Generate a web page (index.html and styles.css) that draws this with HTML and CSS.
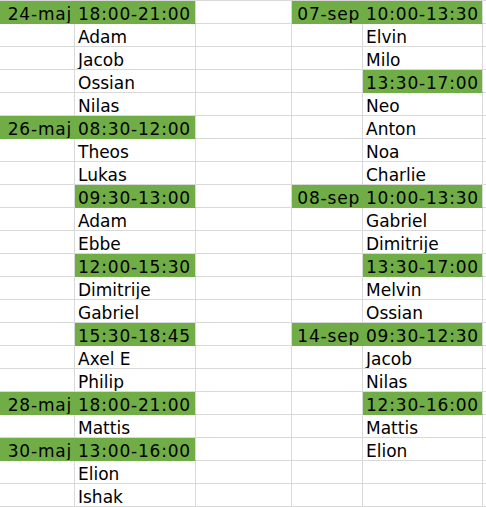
FILE: index.html
```html
<!DOCTYPE html>
<html lang="sv">
<head>
<meta charset="utf-8">
<title>Schema</title>
<link rel="stylesheet" href="styles.css">
</head>
<body>
<div class="sheet">
  <div class="c a g">24-maj</div><div class="c b g">18:00-21:00</div><div class="c x"></div><div class="c d g">07-sep</div><div class="c e g">10:00-13:30</div><div class="c f"></div>
  <div class="c a"></div><div class="c b">Adam</div><div class="c x"></div><div class="c d"></div><div class="c e">Elvin</div><div class="c f"></div>
  <div class="c a"></div><div class="c b">Jacob</div><div class="c x"></div><div class="c d"></div><div class="c e">Milo</div><div class="c f"></div>
  <div class="c a"></div><div class="c b">Ossian</div><div class="c x"></div><div class="c d"></div><div class="c e g">13:30-17:00</div><div class="c f"></div>
  <div class="c a"></div><div class="c b">Nilas</div><div class="c x"></div><div class="c d"></div><div class="c e">Neo</div><div class="c f"></div>
  <div class="c a g">26-maj</div><div class="c b g">08:30-12:00</div><div class="c x"></div><div class="c d"></div><div class="c e">Anton</div><div class="c f"></div>
  <div class="c a"></div><div class="c b">Theos</div><div class="c x"></div><div class="c d"></div><div class="c e">Noa</div><div class="c f"></div>
  <div class="c a"></div><div class="c b">Lukas</div><div class="c x"></div><div class="c d"></div><div class="c e">Charlie</div><div class="c f"></div>
  <div class="c a"></div><div class="c b g">09:30-13:00</div><div class="c x"></div><div class="c d g">08-sep</div><div class="c e g">10:00-13:30</div><div class="c f"></div>
  <div class="c a"></div><div class="c b">Adam</div><div class="c x"></div><div class="c d"></div><div class="c e">Gabriel</div><div class="c f"></div>
  <div class="c a"></div><div class="c b">Ebbe</div><div class="c x"></div><div class="c d"></div><div class="c e">Dimitrije</div><div class="c f"></div>
  <div class="c a"></div><div class="c b g">12:00-15:30</div><div class="c x"></div><div class="c d"></div><div class="c e g">13:30-17:00</div><div class="c f"></div>
  <div class="c a"></div><div class="c b">Dimitrije</div><div class="c x"></div><div class="c d"></div><div class="c e">Melvin</div><div class="c f"></div>
  <div class="c a"></div><div class="c b">Gabriel</div><div class="c x"></div><div class="c d"></div><div class="c e">Ossian</div><div class="c f"></div>
  <div class="c a"></div><div class="c b g">15:30-18:45</div><div class="c x"></div><div class="c d g">14-sep</div><div class="c e g">09:30-12:30</div><div class="c f"></div>
  <div class="c a"></div><div class="c b">Axel E</div><div class="c x"></div><div class="c d"></div><div class="c e">Jacob</div><div class="c f"></div>
  <div class="c a"></div><div class="c b">Philip</div><div class="c x"></div><div class="c d"></div><div class="c e">Nilas</div><div class="c f"></div>
  <div class="c a g">28-maj</div><div class="c b g">18:00-21:00</div><div class="c x"></div><div class="c d"></div><div class="c e g">12:30-16:00</div><div class="c f"></div>
  <div class="c a"></div><div class="c b">Mattis</div><div class="c x"></div><div class="c d"></div><div class="c e">Mattis</div><div class="c f"></div>
  <div class="c a g">30-maj</div><div class="c b g">13:00-16:00</div><div class="c x"></div><div class="c d"></div><div class="c e">Elion</div><div class="c f"></div>
  <div class="c a"></div><div class="c b">Elion</div><div class="c x"></div><div class="c d"></div><div class="c e"></div><div class="c f"></div>
  <div class="c a"></div><div class="c b">Ishak</div><div class="c x"></div><div class="c d"></div><div class="c e"></div><div class="c f"></div>
</div>
</body>
</html>
```
FILE: styles.css
```css
html, body {
  margin: 0;
  padding: 0;
  background: #ffffff;
}

.sheet {
  display: grid;
  grid-template-columns: 75px 121px 96px 71px 120px 3px;
  grid-auto-rows: 23px;
  border-top: 1px solid #d9d9d9;
  font-family: "DejaVu Sans", Verdana, sans-serif;
  font-size: 17px;
  color: #000000;
  overflow: hidden;
}

.c {
  box-sizing: border-box;
  border-right: 1px solid #d9d9d9;
  border-bottom: 1px solid #d9d9d9;
  line-height: 19px;
  padding-top: 4px;
  white-space: nowrap;
  overflow: hidden;
}

.a, .d {
  text-align: right;
  padding-right: 2px;
}

.b, .e {
  padding-left: 3px;
}

.f {
  border-right: none;
}

.g {
  background: #70ad47;
  border-bottom-color: #70ad47;
  letter-spacing: 0.8px;
}

.a.g, .d.g {
  border-right-color: #70ad47;
}
```
